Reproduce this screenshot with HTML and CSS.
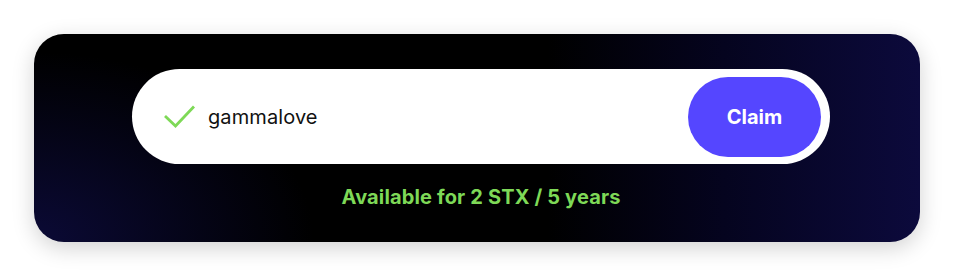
FILE: index.html
```html
<!DOCTYPE html>
<html lang="en">
<head>
<meta charset="utf-8">
<link rel="stylesheet" href="styles.css">
</head>
<body>
  <div class="card">
    <div class="search">
      <svg class="check" width="31" height="23" viewBox="0 0 31 23" aria-hidden="true">
        <path d="M1 11 L11.5 21 L30 1.5" fill="none" stroke="#7ed957" stroke-width="2.8" stroke-linecap="butt" stroke-linejoin="miter"/>
      </svg>
      <span class="name">gammalove</span>
      <button class="claim">Claim</button>
    </div>
    <p class="status">Available for 2 STX / 5 years</p>
  </div>
</body>
</html>
```
FILE: styles.css
```css
html, body {
  margin: 0;
  background: #ffffff;
}
body {
  padding: 34px 33px 34px 34px;
  font-family: Inter, "Noto Sans", sans-serif;
}
.card {
  box-sizing: border-box;
  width: 886px;
  height: 208px;
  border-radius: 30px;
  padding: 35px 90px 0 98px;
  background:
    radial-gradient(ellipse 280px 190px at 0% 100%, rgba(12, 11, 60, 0.9) 0%, rgba(12, 11, 60, 0) 100%),
    linear-gradient(90deg, #000000 0%, #000000 58%, #05041f 78%, #0c0a3c 100%);
  background-color: #000;
  box-shadow: 0 6px 22px rgba(0, 0, 0, 0.18);
  display: flex;
  flex-direction: column;
  align-items: stretch;
}
.search {
  height: 95px;
  background: #ffffff;
  border-radius: 48px;
  display: flex;
  align-items: center;
  padding: 0 9px 0 32px;
}
.check {
  display: block;
  margin-top: -1px;
}
.name {
  margin-left: 13px;
  font-size: 20px;
  color: #111;
  flex: 1;
  letter-spacing: 0.1px;
}
.claim {
  width: 133px;
  height: 80px;
  border: none;
  border-radius: 40px;
  background: #5546ff;
  color: #ffffff;
  font-family: Inter, "Noto Sans", sans-serif;
  font-weight: 700;
  font-size: 20px;
  cursor: pointer;
}
.status {
  margin: 21px 0 0 0;
  text-align: center;
  color: #7ed957;
  font-weight: 700;
  font-size: 20px;
  letter-spacing: 0.15px;
}
```
